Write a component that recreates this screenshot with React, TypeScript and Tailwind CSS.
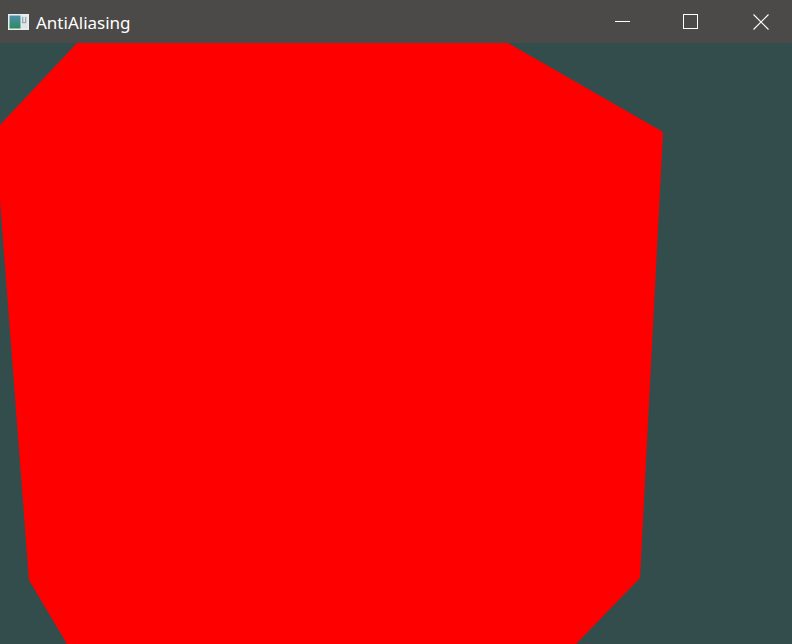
const POLY = '77,0 508,0 663,89 640,535 576,601 67,601 29,537 0,157 0,82';

const AppIcon = () => (
  <svg width="21" height="16" viewBox="0 0 21 16">
    <defs>
      <linearGradient id="ico" x1="0" y1="0" x2="0" y2="1">
        <stop offset="0" stopColor="#4f8fb0" />
        <stop offset="1" stopColor="#2f8a5a" />
      </linearGradient>
    </defs>
    <rect x="0" y="0" width="21" height="16" fill="#e8eef2" />
    <rect x="1.5" y="1.5" width="11" height="13" fill="url(#ico)" />
    <rect x="13" y="1.5" width="6.5" height="13" fill="#dfe6ea" />
    <rect x="14" y="3" width="1.3" height="5" fill="#9aa8b0" />
    <rect x="17" y="3" width="1.3" height="5" fill="#9aa8b0" />
    <rect x="14" y="8" width="4.3" height="1.2" fill="#9aa8b0" />
  </svg>
);

const WinButton = ({ children }: { children: React.ReactNode }) => (
  <div className="w-[46px] h-full flex items-center justify-center">{children}</div>
);

export default function App() {
  return (
    <div className="w-[792px] h-[644px] flex flex-col bg-[#334d4d] overflow-hidden">
      <div className="h-[43px] shrink-0 flex items-center bg-[#4c4a48] text-white">
        <div className="pl-2 pr-[7px] flex items-center pt-[1px]">
          <AppIcon />
        </div>
        <span className="text-[17px] leading-none pt-[2px] font-['Noto_Sans',sans-serif]">
          AntiAliasing
        </span>
        <div className="ml-auto flex h-full pr-[8px]">
          <WinButton>
            <svg width="16" height="16" viewBox="0 0 16 16">
              <path d="M1 7.5h15" stroke="#fff" strokeWidth="1" />
            </svg>
          </WinButton>
          <div className="w-[23px]" />
          <WinButton>
            <svg width="16" height="16" viewBox="0 0 16 16">
              <rect x="0.5" y="0.5" width="14" height="14" fill="none" stroke="#fff" strokeWidth="1" />
            </svg>
          </WinButton>
          <div className="w-[24px]" />
          <WinButton>
            <svg width="16" height="16" viewBox="0 0 16 16">
              <path d="M0.5 0.5l15 15M15.5 0.5l-15 15" stroke="#fff" strokeWidth="1.1" />
            </svg>
          </WinButton>
        </div>
      </div>
      <div className="flex-1">
        <svg width="792" height="601" viewBox="0 0 792 601" className="block">
          <polygon points={POLY} fill="#ff0000" />
        </svg>
      </div>
    </div>
  );
}
